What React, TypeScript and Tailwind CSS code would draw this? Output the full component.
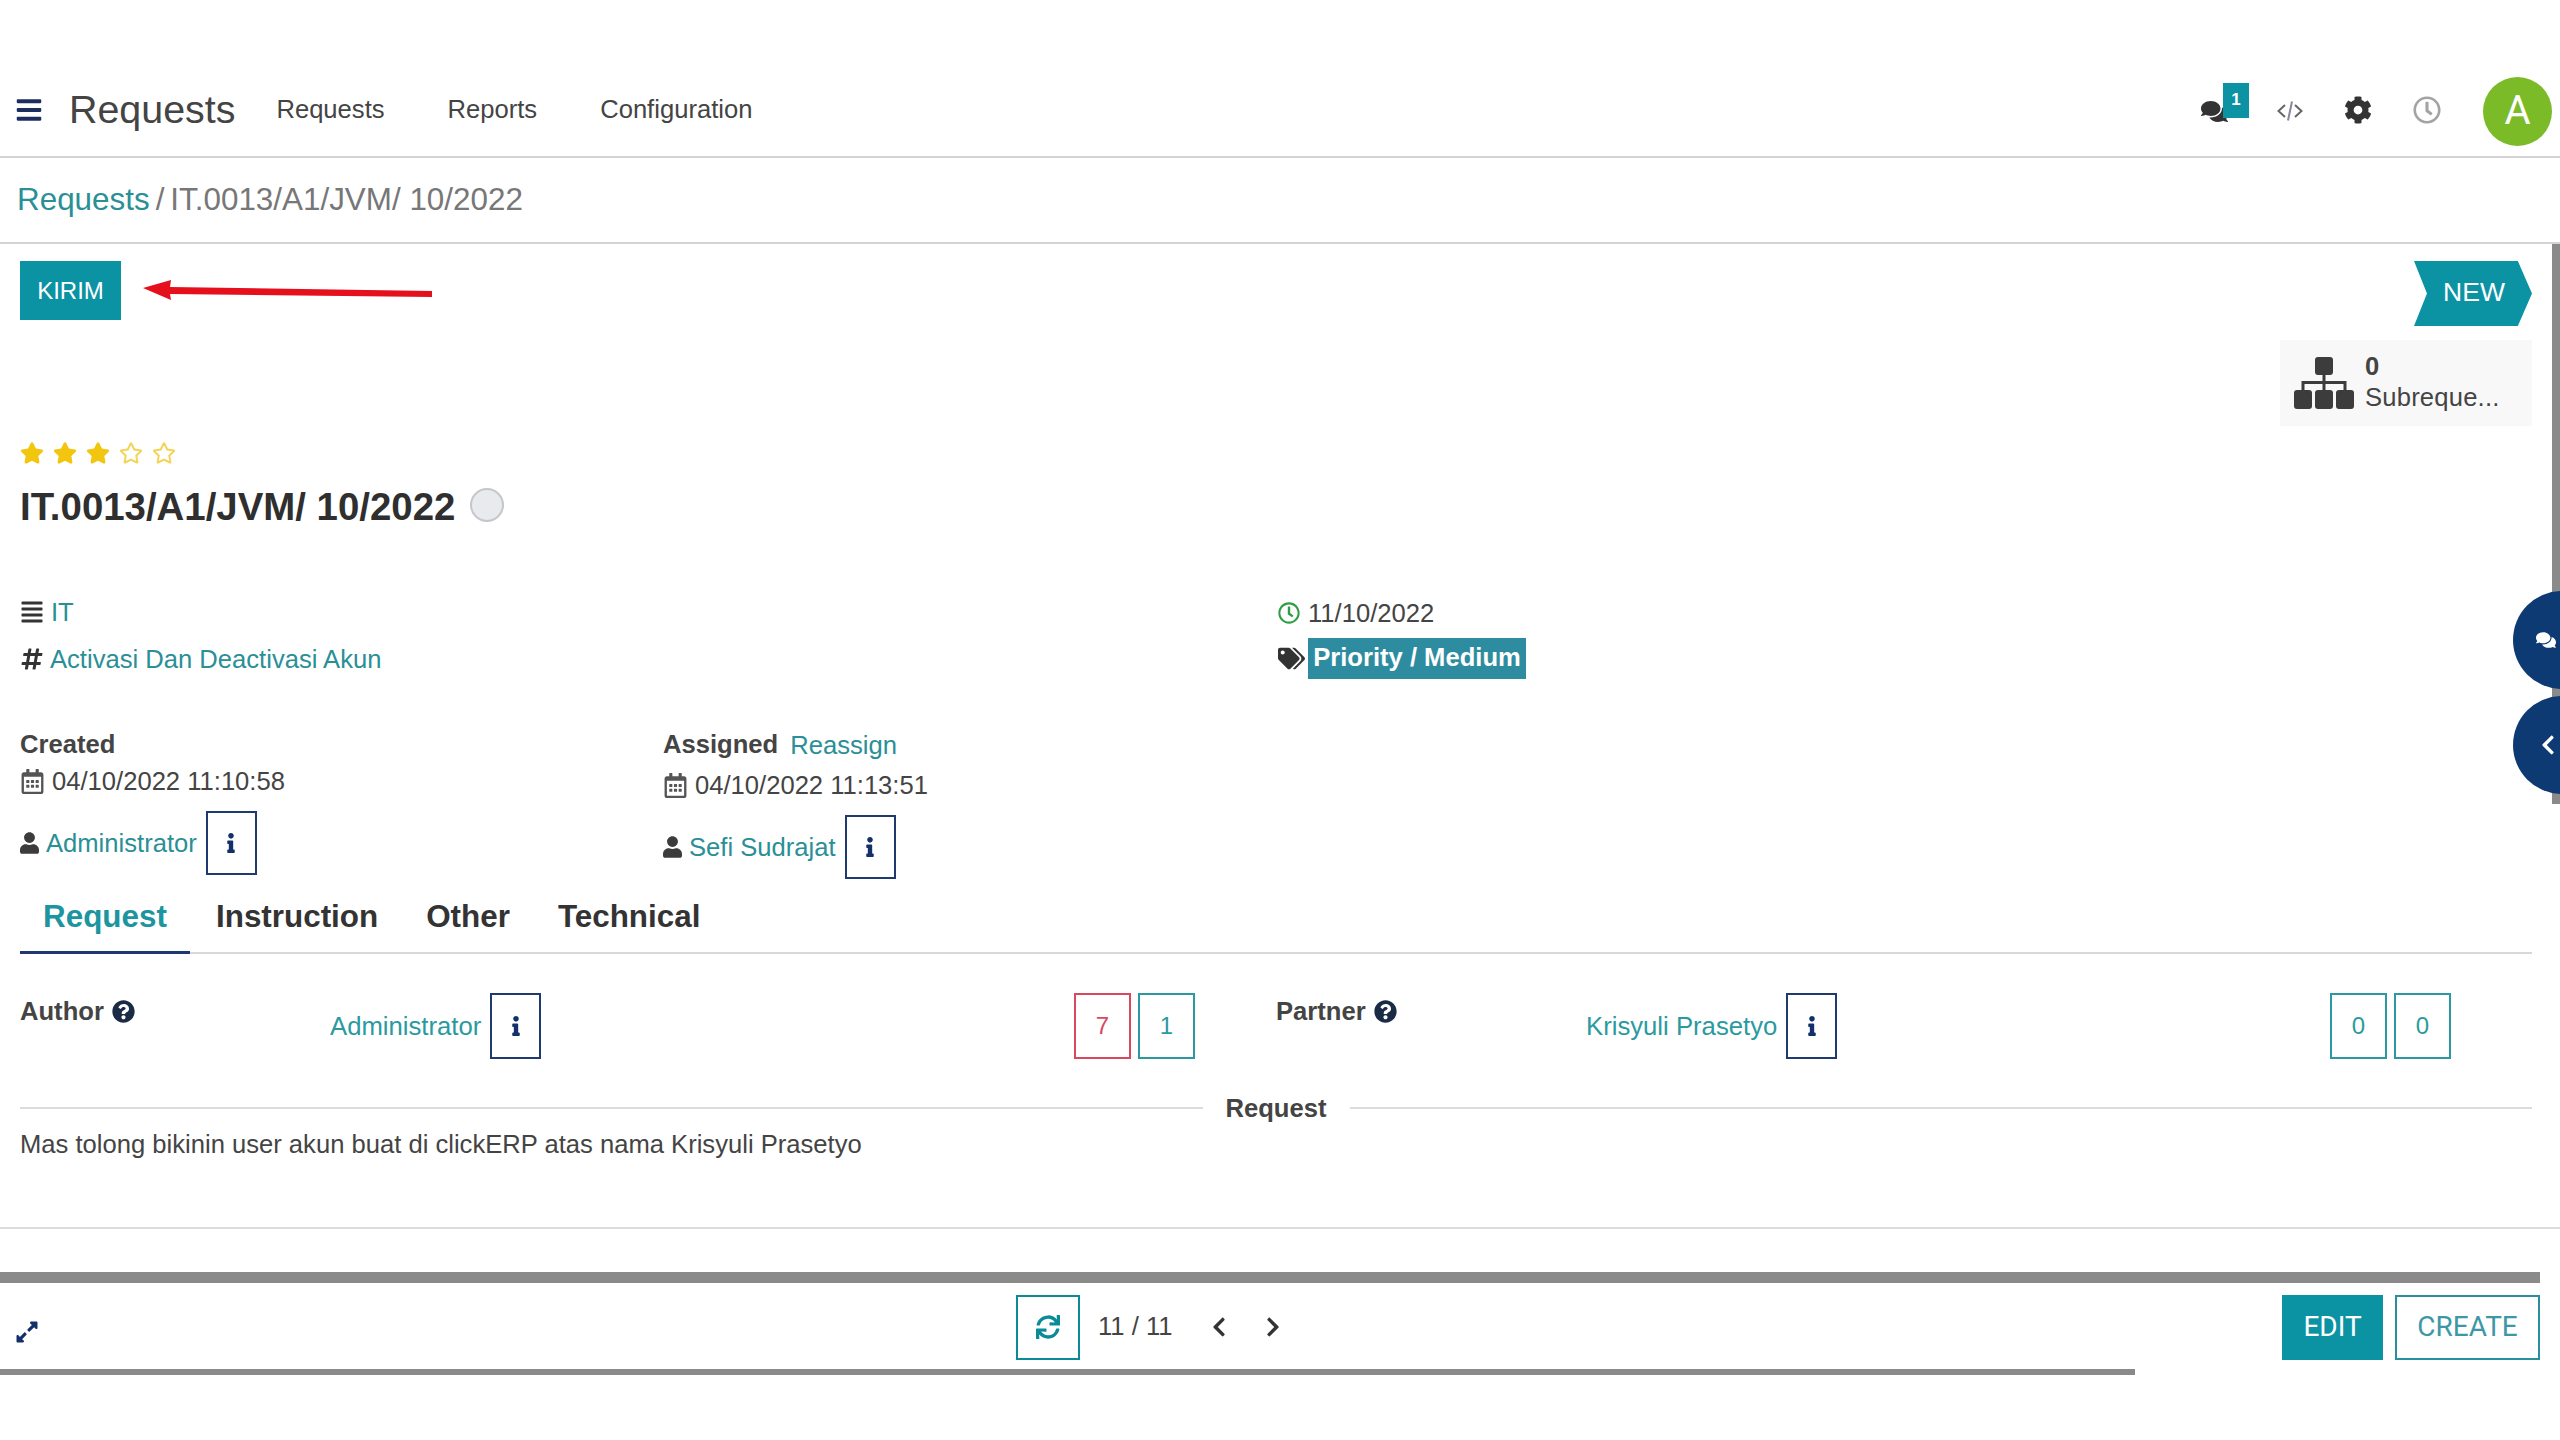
import React from "react";
import {
  FaBars, FaCog, FaComments, FaRegClock, FaStar, FaRegStar, FaHashtag, FaAlignJustify,
  FaTags, FaRegCalendarAlt, FaUser, FaInfo, FaQuestionCircle, FaSync, FaChevronLeft, FaChevronRight, FaExpandAlt,
} from "react-icons/fa";

function InfoBox({ className = "" }: { className?: string }) {
  return (
    <span className={"flex items-center justify-center border-2 border-[#1f3a6e] text-[#14306b] " + className}>
      <FaInfo className="text-[20px]" />
    </span>
  );
}

function Person({ name, offset = "" }: { name: string; offset?: string }) {
  return (
    <div className={"flex items-center " + offset}>
      <FaUser className="w-[19px] h-[22px] text-[#3c3c3c]" />
      <a className="ml-[7px] text-[#2a8f96] text-[25.6px]">{name}</a>
      <InfoBox className="ml-[9px] w-[51px] h-[64px]" />
    </div>
  );
}

function Stamp({ value }: { value: string }) {
  return (
    <div className="flex items-center gap-[7px] text-[25.6px] text-[#444] h-[30px]">
      <FaRegCalendarAlt className="text-[25px] text-[#555]" />
      <span>{value}</span>
    </div>
  );
}

function Field({ label, name, a, b, aClass }: { label: string; name: string; a: string; b: string; aClass: string }) {
  return (
    <div className="flex items-start pr-[81px]">
      <div className="w-[310px] flex items-center gap-[8px] leading-[36px] font-bold text-[#444] text-[25.6px]">
        {label}
        <FaQuestionCircle className="text-[23px] text-[#1c2b45]" />
      </div>
      <div className="flex items-center h-[66px]">
        <a className="text-[#2a9aa0] text-[25.7px]">{name}</a>
        <InfoBox className="ml-[9px] w-[51px] h-[66px]" />
      </div>
      <div className="ml-auto flex gap-[7px] text-[24px]">
        <span className={"w-[57px] h-[66px] flex items-center justify-center border-2 " + aClass}>{a}</span>
        <span className="w-[57px] h-[66px] flex items-center justify-center border-2 border-[#2a9aa0] text-[#2a9aa0]">{b}</span>
      </div>
    </div>
  );
}

export default function App() {
  return (
    <div className="relative w-[2560px] h-[1440px] overflow-hidden bg-white text-[#444] font-['Liberation_Sans',Arial,sans-serif]">
      {/* top bar */}
      <header className="h-[158px] pt-[63px] border-b-2 border-[#d4d4d4] flex items-center pl-[15px] pr-[8px]">
        <FaBars className="text-[28px] text-[#1b2f5e]" />
        <span className="ml-[26px] text-[39.4px] text-[#444]">Requests</span>
        <nav className="flex ml-[41px] gap-[63px] text-[25.6px] text-[#444]">
          <a>Requests</a>
          <a>Reports</a>
          <a>Configuration</a>
        </nav>
        <div className="ml-auto flex items-center">
          <div className="relative w-[48px] h-[40px] mr-[28px]">
            <FaComments className="absolute left-0 bottom-[5px] text-[27px] text-[#333]" />
            <span className="absolute right-0 top-[-7px] w-[26px] h-[35px] bg-[#0b93a3] text-white text-[17px] font-bold flex items-center justify-center">1</span>
          </div>
          <svg className="mt-[2px]" width="26" height="22" viewBox="0 0 26 22" fill="none" stroke="#666" strokeWidth="2">
            <path d="M8 5 L1.5 11 L8 17" />
            <path d="M18 5 L24.5 11 L18 17" />
            <path d="M15 1.5 L11 20.5" stroke="#889" />
          </svg>
          <FaCog className="ml-[41px] text-[28px] text-[#333]" />
          <FaRegClock className="ml-[41px] text-[28px] text-[#a3a3a3]" />
          <span className="ml-[42px] mt-[3px] w-[69px] h-[69px] rounded-full bg-[#7bbb28] text-white text-[40px] flex items-center justify-center font-['Roboto',sans-serif]">A</span>
        </div>
      </header>

      {/* breadcrumb */}
      <div className="h-[86px] border-b-2 border-[#d4d4d4] flex items-center pl-[17px] text-[31.4px]">
        <a className="text-[#2a8f96]">Requests</a>
        <span className="ml-[6px] text-[#777]">/</span>
        <span className="ml-[6px] text-[#777]">IT.0013/A1/JVM/ 10/2022</span>
      </div>

      {/* form */}
      <main className="pl-[20px] pr-[28px]">
        <div className="flex items-start justify-between pt-[17px]">
          <div className="flex items-center">
            <button className="w-[101px] h-[59px] bg-[#0b93a3] text-white text-[24px]">KIRIM</button>
            <svg className="ml-[22px] mt-[3px]" width="290" height="24" viewBox="0 0 290 24">
              <path d="M0 8 L28 0 L27 7 L289 11 L289 17 L27 14 L28 20 Z" fill="#e5101c" />
            </svg>
          </div>
          <div className="w-[118px] h-[65px] bg-[#0b93a3] text-white text-[26.5px] flex items-center justify-center pl-[2px] pb-[2px] [clip-path:polygon(0_0,88%_0,100%_50%,88%_100%,0_100%,11%_50%)]">
            NEW
          </div>
        </div>

        <div className="flex justify-end mt-[14px]">
          <div className="w-[252px] h-[86px] bg-[#f8f8f8] flex items-center pl-[14px]">
            <svg width="60" height="52" viewBox="0 0 60 52" fill="#3c3c3c">
              <rect x="21" y="0" width="18" height="18" rx="3" />
              <rect x="0" y="33" width="18" height="19" rx="3" />
              <rect x="21" y="33" width="18" height="19" rx="3" />
              <rect x="42" y="33" width="18" height="19" rx="3" />
              <path d="M28.5 18h3v6h21v9h-3v-6h-18v6h-3v-6h-18v6h-3v-9h21z" />
            </svg>
            <div className="ml-[11px] text-[25.6px] leading-[31px] -mt-[2px]">
              <div className="font-bold">0</div>
              <div className="tracking-[0.2px]">Subreque...</div>
            </div>
          </div>
        </div>

        <div className="flex gap-[9px] mt-[15px] text-[24px] text-[#f2c50f]">
          <FaStar /><FaStar /><FaStar /><FaRegStar className="text-[#f3d458]" /><FaRegStar className="text-[#f3d458]" />
        </div>

        <div className="flex items-center mt-[22px] h-[40px]">
          <h1 className="font-bold text-[38.4px] text-[#2f2f2f]">IT.0013/A1/JVM/ 10/2022</h1>
          <span className="ml-[15px] -mt-[4px] w-[34px] h-[34px] rounded-full bg-[#e8eaee] border-2 border-[#c4c7cb]" />
        </div>

        <div className="grid grid-cols-[1256px_1fr] mt-[70px]">
          <div className="flex flex-col gap-[17px] text-[25.6px]">
            <div className="flex items-center h-[30px] gap-[7px]">
              <FaAlignJustify className="text-[24px] text-[#333]" />
              <a className="text-[#2a8f96]">IT</a>
            </div>
            <div className="flex items-center h-[30px] gap-[6px]">
              <FaHashtag className="text-[24px] text-[#333]" />
              <a className="text-[#2a8f96]">Activasi Dan Deactivasi Akun</a>
            </div>
          </div>
          <div className="flex flex-col gap-[10px] text-[25.6px]">
            <div className="flex items-center h-[30px] gap-[8px] mt-[1px]">
              <FaRegClock className="text-[22px] text-[#2f9e44] ml-[2px]" />
              <span>11/10/2022</span>
            </div>
            <div className="flex items-center">
              <FaTags className="text-[27px] text-[#333] ml-[2px]" />
              <span className="ml-[3px] h-[41px] w-[218px] pb-[3px] bg-[#2e8ca0] text-white font-bold flex items-center justify-center">Priority / Medium</span>
            </div>
          </div>
        </div>

        <div className="flex mt-[50px]">
          <div className="w-[643px]">
            <div className="font-bold text-[25.6px] h-[30px] leading-[30px]">Created</div>
            <div className="mt-[7px]"><Stamp value="04/10/2022 11:10:58" /></div>
            <Person name="Administrator" offset="mt-[15px]" />
          </div>
          <div>
            <div className="flex items-center h-[30px] text-[25.6px]">
              <span className="font-bold">Assigned</span>
              <a className="ml-[12px] mt-[2px] text-[#2a8f96]">Reassign</a>
            </div>
            <div className="mt-[11px]"><Stamp value="04/10/2022 11:13:51" /></div>
            <Person name="Sefi Sudrajat" offset="mt-[15px]" />
          </div>
        </div>

        <div className="flex mt-[3px] border-b-2 border-[#d8d8d8] h-[72px] font-bold text-[31.4px]">
          <a className="w-[170px] h-[72px] border-b-[3px] border-[#1f3a6e] text-[#1d95a0] flex items-center justify-center">Request</a>
          <a className="ml-[26px] flex items-center text-[#333]">Instruction</a>
          <a className="ml-[48px] flex items-center text-[#333]">Other</a>
          <a className="ml-[48px] flex items-center text-[#333]">Technical</a>
        </div>

        <div className="grid grid-cols-[1256px_1fr] mt-[39px]">
          <Field label="Author" name="Administrator" a="7" b="1" aClass="border-[#d9485f] text-[#d9485f]" />
          <Field label="Partner" name="Krisyuli Prasetyo" a="0" b="0" aClass="border-[#2a9aa0] text-[#2a9aa0]" />
        </div>

        <div className="flex items-center mt-[34px] h-[30px]">
          <span className="flex-1 h-[2px] bg-[#dcdcdc]" />
          <span className="mx-[23px] font-bold text-[25.6px] text-[#444]">Request</span>
          <span className="flex-1 h-[2px] bg-[#dcdcdc]" />
        </div>
        <p className="mt-[6px] text-[25.6px] leading-[30px]">Mas tolong bikinin user akun buat di clickERP atas nama Krisyuli Prasetyo</p>
      </main>

      <div className="mt-[68px] h-[2px] bg-[#dcdcdc]" />
      <div className="mt-[43px] h-[11px] w-[2540px] bg-[#8a8a8a]" />

      {/* pager bar */}
      <div className="flex items-center h-[86px] pr-[20px] pt-[2px]">
        <FaExpandAlt className="ml-[15px] mt-[10px] text-[24px] text-[#14306b]" />
        <div className="ml-[977px] flex items-center">
          <span className="w-[64px] h-[65px] border-2 border-[#0b8b98] flex items-center justify-center text-[#0b8b98]">
            <FaSync className="text-[24px]" />
          </span>
          <span className="ml-[18px] text-[25.6px] -mt-[2px]">11 / 11</span>
          <FaChevronLeft className="ml-[36px] text-[22px] text-[#333]" />
          <FaChevronRight className="ml-[32px] text-[22px] text-[#333]" />
        </div>
        <div className="ml-auto flex gap-[12px] text-[28px] font-['Roboto',sans-serif]">
          <button className="w-[101px] h-[65px] bg-[#0b93a3] text-white">EDIT</button>
          <button className="w-[145px] h-[65px] border-2 border-[#2a8f9c] text-[#3e97a6]">CREATE</button>
        </div>
      </div>
      <div className="h-[6px] w-[2135px] bg-[#8a8a8a]" />

      {/* vertical scrollbar and floating side buttons */}
      <div className="absolute right-0 top-[244px] w-[8px] h-[560px] bg-[#8a8a8a]" />
      <div className="absolute left-[2513px] top-[591px] w-[98px] h-[98px] rounded-full bg-[#0e3a73] flex items-center pl-[23px] text-white">
        <FaComments className="text-[20px]" />
      </div>
      <div className="absolute left-[2513px] top-[696px] w-[98px] h-[98px] rounded-full bg-[#0e3a73] flex items-center pl-[24px] text-white">
        <FaChevronLeft className="text-[22px]" />
      </div>
    </div>
  );
}
